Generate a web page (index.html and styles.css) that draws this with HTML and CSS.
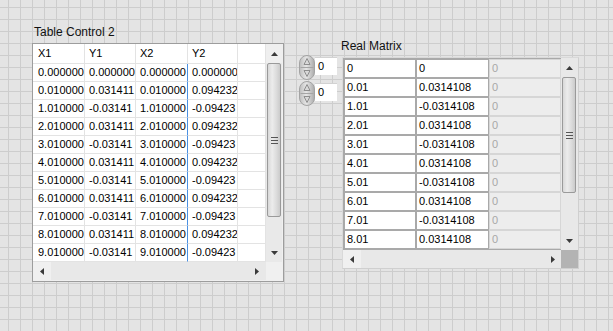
FILE: index.html
```html
<!DOCTYPE html>
<html>
<head>
<meta charset="utf-8">
<link rel="stylesheet" href="styles.css">
</head>
<body>
<div class="panel">
  <div class="ctl tablectl">
    <div class="label">Table Control 2</div>
    <div class="tbox">
      <div class="tmain">
        <div class="tgrid">
          <div class="c h">X1</div><div class="c h">Y1</div><div class="c h">X2</div><div class="c h">Y2</div><div class="c h"></div>
          <div class="c">0.000000</div><div class="c">0.000000</div><div class="c b">0.000000</div><div class="c">0.000000</div><div class="c"></div>
          <div class="c">0.010000</div><div class="c">0.031411</div><div class="c b">0.010000</div><div class="c">0.094232</div><div class="c"></div>
          <div class="c">1.010000</div><div class="c">-0.03141</div><div class="c b">1.010000</div><div class="c">-0.09423</div><div class="c"></div>
          <div class="c">2.010000</div><div class="c">0.031411</div><div class="c b">2.010000</div><div class="c">0.094232</div><div class="c"></div>
          <div class="c">3.010000</div><div class="c">-0.03141</div><div class="c b">3.010000</div><div class="c">-0.09423</div><div class="c"></div>
          <div class="c">4.010000</div><div class="c">0.031411</div><div class="c b">4.010000</div><div class="c">0.094232</div><div class="c"></div>
          <div class="c">5.010000</div><div class="c">-0.03141</div><div class="c b">5.010000</div><div class="c">-0.09423</div><div class="c"></div>
          <div class="c">6.010000</div><div class="c">0.031411</div><div class="c b">6.010000</div><div class="c">0.094232</div><div class="c"></div>
          <div class="c">7.010000</div><div class="c">-0.03141</div><div class="c b">7.010000</div><div class="c">-0.09423</div><div class="c"></div>
          <div class="c">8.010000</div><div class="c">0.031411</div><div class="c b">8.010000</div><div class="c">0.094232</div><div class="c"></div>
          <div class="c">9.010000</div><div class="c">-0.03141</div><div class="c b">9.010000</div><div class="c">-0.09423</div><div class="c"></div>
        </div>
        <div class="vscroll tv">
          <div class="btn bup"><svg width="7" height="4" viewBox="0 0 7 4"><path d="M3.5 0 L7 4 H0 Z" fill="#3a3a3a"/></svg></div>
          <div class="thumb tthumb"><svg width="7" height="7" viewBox="0 0 7 7"><path d="M0 0.5 H7 M0 3.5 H7 M0 6.5 H7" stroke="#555" stroke-width="1"/></svg></div>
          <div class="track"></div>
          <div class="btn bdown"><svg width="7" height="4" viewBox="0 0 7 4"><path d="M0 0 H7 L3.5 4 Z" fill="#3a3a3a"/></svg></div>
        </div>
      </div>
      <div class="hrow">
        <div class="hscroll">
          <svg width="4" height="7" viewBox="0 0 4 7"><path d="M4 0 V7 L0 3.5 Z" fill="#3a3a3a"/></svg>
          <svg width="4" height="7" viewBox="0 0 4 7"><path d="M0 0 V7 L4 3.5 Z" fill="#3a3a3a"/></svg>
        </div>
        <div class="corner"></div>
      </div>
    </div>
  </div>

  <div class="ctl matrixctl">
    <div class="label mlabel">Real Matrix</div>
    <div class="mrow">
      <div class="idxcol">
        <div class="idx">
          <svg class="spin" width="16" height="25" viewBox="0 0 16 25">
            <defs><linearGradient id="sg1" x1="0" x2="1" y1="0" y2="0"><stop offset="0" stop-color="#bdbdbd"/><stop offset=".45" stop-color="#e6e6e6"/><stop offset="1" stop-color="#aaaaaa"/></linearGradient></defs>
            <rect x=".5" y=".5" width="15" height="24" rx="7.5" fill="url(#sg1)" stroke="#a3a3a3"/>
            <line x1="1.5" y1="12.5" x2="14.5" y2="12.5" stroke="#a5a5a5"/>
            <path d="M8 3.5 L11 9.5 H5 Z" fill="#d9d9d9" stroke="#8e8e8e"/>
            <path d="M8 21.5 L11 15.5 H5 Z" fill="#d9d9d9" stroke="#8e8e8e"/>
          </svg>
          <div class="ibox">0</div>
        </div>
        <div class="idx">
          <svg class="spin" width="16" height="25" viewBox="0 0 16 25">
            <defs><linearGradient id="sg2" x1="0" x2="1" y1="0" y2="0"><stop offset="0" stop-color="#bdbdbd"/><stop offset=".45" stop-color="#e6e6e6"/><stop offset="1" stop-color="#aaaaaa"/></linearGradient></defs>
            <rect x=".5" y=".5" width="15" height="24" rx="7.5" fill="url(#sg2)" stroke="#a3a3a3"/>
            <line x1="1.5" y1="12.5" x2="14.5" y2="12.5" stroke="#a5a5a5"/>
            <path d="M8 3.5 L11 9.5 H5 Z" fill="#d9d9d9" stroke="#8e8e8e"/>
            <path d="M8 21.5 L11 15.5 H5 Z" fill="#d9d9d9" stroke="#8e8e8e"/>
          </svg>
          <div class="ibox">0</div>
        </div>
      </div>
      <div class="mframe">
        <div class="mmain">
          <div class="mgrid">
            <div class="mc">0</div><div class="mc">0</div><div class="mc dis">0</div>
            <div class="mc">0.01</div><div class="mc">0.0314108</div><div class="mc dis">0</div>
            <div class="mc">1.01</div><div class="mc">-0.0314108</div><div class="mc dis">0</div>
            <div class="mc">2.01</div><div class="mc">0.0314108</div><div class="mc dis">0</div>
            <div class="mc">3.01</div><div class="mc">-0.0314108</div><div class="mc dis">0</div>
            <div class="mc">4.01</div><div class="mc">0.0314108</div><div class="mc dis">0</div>
            <div class="mc">5.01</div><div class="mc">-0.0314108</div><div class="mc dis">0</div>
            <div class="mc">6.01</div><div class="mc">0.0314108</div><div class="mc dis">0</div>
            <div class="mc">7.01</div><div class="mc">-0.0314108</div><div class="mc dis">0</div>
            <div class="mc">8.01</div><div class="mc">0.0314108</div><div class="mc dis">0</div>
          </div>
          <div class="vscroll mv">
            <div class="btn mbup"><svg width="7" height="4" viewBox="0 0 7 4"><path d="M3.5 0 L7 4 H0 Z" fill="#3a3a3a"/></svg></div>
            <div class="thumb mthumb"><svg width="7" height="7" viewBox="0 0 7 7"><path d="M0 0.5 H7 M0 3.5 H7 M0 6.5 H7" stroke="#555" stroke-width="1"/></svg></div>
            <div class="track"></div>
            <div class="btn mbdown"><svg width="7" height="4" viewBox="0 0 7 4"><path d="M0 0 H7 L3.5 4 Z" fill="#3a3a3a"/></svg></div>
          </div>
        </div>
        <div class="mhrow">
          <div class="hscroll mhs">
            <svg width="4" height="7" viewBox="0 0 4 7"><path d="M4 0 V7 L0 3.5 Z" fill="#3a3a3a"/></svg>
            <svg width="4" height="7" viewBox="0 0 4 7"><path d="M0 0 V7 L4 3.5 Z" fill="#3a3a3a"/></svg>
          </div>
          <div class="mcorner"></div>
        </div>
      </div>
    </div>
  </div>
</div>
</body>
</html>
```

FILE: styles.css
```css
html, body {
  margin: 0;
  padding: 0;
}

.panel {
  position: relative;
  width: 613px;
  height: 331px;
  overflow: hidden;
  background-color: #e4e4e4;
  background-image:
    linear-gradient(to right, #cdcdcd 1px, transparent 1px),
    linear-gradient(to bottom, #cdcdcd 1px, transparent 1px);
  background-size: 12px 12px;
  background-position: 8px 7px;
  font-family: "Liberation Sans", Arial, sans-serif;
  font-size: 11px;
  color: #000;
}

.ctl {
  position: absolute;
}

.tablectl {
  left: 32px;
  top: 25px;
}

.label {
  font-size: 12px;
  line-height: 15px;
  height: 15px;
  margin-bottom: 3px;
  padding-left: 2px;
  color: #111;
  white-space: nowrap;
}

/* ---------- Table control ---------- */
.tbox {
  width: 249px;
  border: 1px solid #9d9d9d;
  background: #f0f0f0;
  padding: 0 1px 1px 0;
}

.tmain {
  display: flex;
}

.tgrid {
  display: grid;
  grid-template-columns: 52px 51px 52px 50px 28px;
  grid-template-rows: 20px;
  grid-auto-rows: 18px;
  background: #fff;
  width: 233px;
}

.c {
  box-sizing: border-box;
  border-right: 1px solid #e3e3e3;
  border-bottom: 1px solid #e3e3e3;
  padding-left: 4px;
  line-height: 17px;
  white-space: nowrap;
  overflow: hidden;
}

.c:nth-child(5n+1) {
  padding-left: 5px;
}

.c.h {
  line-height: 19px;
}

.c.b {
  border-right-color: #4a90e2;
}

.vscroll {
  display: flex;
  flex-direction: column;
  background: #e9e9e9;
}

.tv {
  width: 16px;
  height: 218px;
}

.btn {
  display: flex;
  align-items: center;
  justify-content: center;
  flex: none;
}

.bup {
  height: 19px;
  background: #efefef;
}

.bdown {
  height: 18px;
}

.thumb {
  box-sizing: border-box;
  margin: 0 1px;
  border: 1px solid #9a9a9a;
  border-radius: 2px;
  background: linear-gradient(to right, #d8d8d8, #ececec 35%, #dcdcdc 70%, #cbcbcb);
  display: flex;
  align-items: center;
  justify-content: center;
  flex: none;
}

.tthumb {
  height: 154px;
}

.track {
  flex: 1;
}

.hrow {
  display: flex;
  height: 18px;
}

.hscroll {
  box-sizing: border-box;
  width: 233px;
  background: linear-gradient(to right, #f0f0f0 0, #f0f0f0 18px, #e8e8e8 18px);
  display: flex;
  align-items: center;
  justify-content: space-between;
  padding: 0 7px;
}

.corner {
  width: 16px;
  background: #f0f0f0;
}

/* ---------- Real Matrix ---------- */
.matrixctl {
  left: 299px;
  top: 39px;
}

.mlabel {
  margin-left: 40px;
}

.mrow {
  display: flex;
}

.idxcol {
  width: 43px;
  margin-top: -2px;
  display: flex;
  flex-direction: column;
  gap: 1px;
}

.idx {
  display: flex;
  align-items: flex-start;
}

.spin {
  display: block;
  flex: none;
}

.ibox {
  box-sizing: border-box;
  width: 22px;
  height: 18px;
  margin-top: 2px;
  background: #fff;
  border-top: 1px solid #d2d2d2;
  padding-left: 3px;
  line-height: 16px;
  color: #000;
}

.mframe {
  border: 1px solid #cfcfcf;
  border-top-color: #d9d9d9;
  border-left-color: #d9d9d9;
  background: #dadada;
}

.mmain {
  display: flex;
}

.mgrid {
  display: grid;
  grid-template-columns: 70px 71px 70px;
  grid-auto-rows: 17px;
  gap: 2px;
  padding: 2px 1px 2px 2px;
  background: #a9a9a9;
}

.mc {
  background: #fff;
  padding-left: 2px;
  line-height: 17px;
  white-space: nowrap;
  overflow: hidden;
}

.mc.dis {
  background: #ededed;
  color: #a8a8a8;
  box-shadow: 0 0 0 1px #d6d6d6;
}

.mv {
  width: 17px;
  height: 192px;
  background: #e8e8e8;
}

.mbup {
  height: 19px;
}

.mthumb {
  height: 116px;
  margin: 0 2px 0 1px;
}

.mbdown {
  height: 18px;
}

.mhrow {
  display: flex;
  height: 18px;
}

.mhs {
  width: 218px;
  padding: 0 6px 0 7px;
}

.mcorner {
  width: 17px;
  background: #b3b3b3;
}
```
